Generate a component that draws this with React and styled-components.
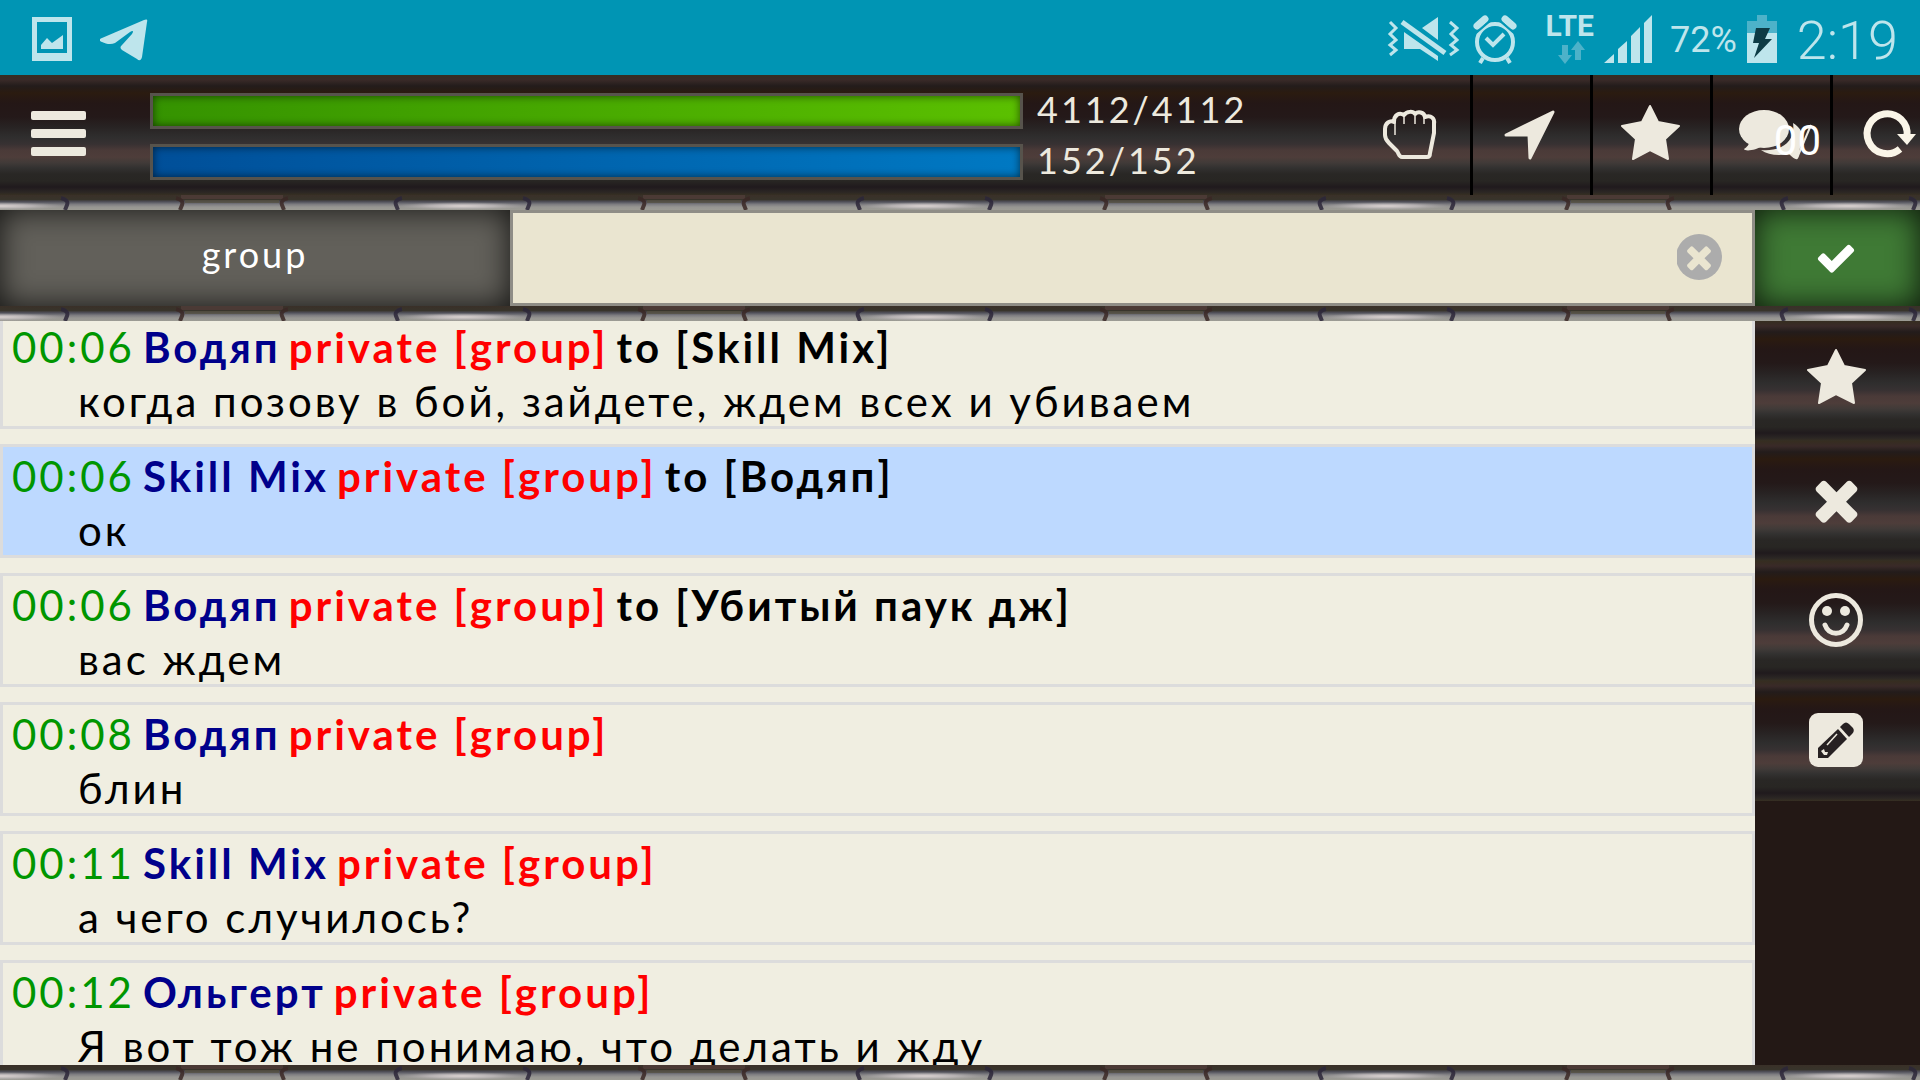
import { useEffect, useRef } from "react";
import styled, { createGlobalStyle, css } from "styled-components";

const GlobalStyle = createGlobalStyle`
  * {
    box-sizing: border-box;
  }

  body {
    margin: 0;
    background: #231815;
    font-family: Lato, "Noto Sans", sans-serif;
  }

  button {
    padding: 0;
    border: none;
    font: inherit;
    color: inherit;
    letter-spacing: inherit;
    cursor: pointer;
  }
`;

const wood = css`
  background: linear-gradient(
    #362d20 0,
    #392a28 5px,
    #231c1b 11px,
    #2b1b10 18px,
    #241716 28px,
    #241919 42px,
    #282323 52px,
    #2f2e2e 62px,
    #373132 69px,
    #4a3a38 75px,
    #4e3d3a 82px,
    #403a38 88px,
    #323130 93px,
    #292725 99px,
    #282623 106px,
    #201a1d 112px,
    #2b2624 117px,
    #362f22 120px
  );
  background-size: 100% 120px;
`;

const Page = styled.div`
  display: flex;
  flex-direction: column;
  height: 100vh;
  overflow: hidden;
  letter-spacing: 3px;
`;

/* status bar */

const StatusBar = styled.div`
  display: flex;
  flex: none;
  align-items: center;
  justify-content: space-between;
  height: 75px;
  padding: 2px 22px 0 32px;
  background: #0095b4;
  color: #bee5ec;
  font-family: Roboto, sans-serif;
  letter-spacing: normal;
`;

const StatusGroup = styled.div`
  display: flex;
  align-items: center;
  gap: ${({ $gap }) => $gap}px;
`;

const Network = styled.div`
  display: flex;
  flex-direction: column;
  align-items: flex-end;
  width: 65px;
  padding-bottom: 3px;
  font-size: 30px;
  font-weight: 700;
  line-height: 30px;
`;

const NetworkArrows = styled.svg`
  margin-right: 9px;
`;

const BatteryLevel = styled.span`
  padding: 3px 0 0 8px;
  font-size: 36px;
`;

const Clock = styled.span`
  padding: 4px 0 0 10px;
  font-size: 54px;
  font-weight: 300;
  line-height: 60px;
`;

/* header */

const Header = styled.header`
  display: grid;
  grid-template-columns: 150px 1fr 330px 567px;
  flex: none;
  height: 120px;
  color: #ede9de;
  ${wood}
`;

const MenuButton = styled.button`
  display: flex;
  align-items: center;
  padding: 0 0 3px 31px;
  background: none;
`;

const Bars = styled.div`
  display: flex;
  flex-direction: column;
  gap: 15px;
  padding-top: 18px;
`;

const Bar = styled.div`
  height: 36px;
  border: 3px solid #57534c;
  background: linear-gradient(to right, ${({ $from, $to }) => `${$from}, ${$to}`});
  box-shadow: inset 0 0 9px rgba(0, 0, 0, 0.6);
`;

const Values = styled.div`
  padding: 9px 0 0 14px;
  font-size: 36px;
  line-height: 51px;
`;

const Actions = styled.nav`
  display: flex;
  overflow: hidden;
`;

const ActionButton = styled.button`
  position: relative;
  display: flex;
  flex: none;
  align-items: center;
  justify-content: center;
  width: 120px;
  padding-right: 3px;
  border-right: 3px solid #000;
  background: none;
`;

const Counter = styled.span`
  position: absolute;
  top: 42px;
  right: 9px;
  color: #fff;
  font-family: Roboto, sans-serif;
  font-size: 42px;
  line-height: 48px;
  letter-spacing: normal;
`;

const ChainSvg = styled.svg`
  display: block;
  flex: none;
  width: 100%;
  height: 15px;
`;

/* message form */

const Form = styled.form`
  display: grid;
  grid-template-columns: 510px 1fr 165px;
  flex: none;
  height: 96px;
`;

const GroupButton = styled.button`
  padding-bottom: 9px;
  background: #62605a;
  box-shadow: inset 0 0 30px rgba(0, 0, 0, 0.8);
  color: #fff;
  font-size: 36px;
`;

const Field = styled.div`
  display: flex;
  align-items: center;
  border: 3px solid #8f8d86;
  background: #eae5d0;
`;

const FieldInput = styled.input`
  flex: 1;
  height: 100%;
  padding: 0 12px;
  border: none;
  outline: none;
  background: none;
  font: inherit;
  font-size: 42px;
`;

const ClearButton = styled.button`
  display: flex;
  margin-right: 30px;
  padding-bottom: 3px;
  background: none;
`;

const SendButton = styled.button`
  display: flex;
  align-items: center;
  justify-content: center;
  padding-right: 3px;
  background: #3f7a35;
  box-shadow: inset 0 0 30px rgba(0, 0, 0, 0.8);
`;

/* chat */

const Main = styled.main`
  display: grid;
  grid-template-columns: 1fr 165px;
  flex: 1;
  min-height: 0;
`;

const Messages = styled.div`
  display: flex;
  flex-direction: column;
  gap: 15px;
  padding-bottom: 15px;
  overflow-y: scroll;
  scrollbar-width: none;
  background: #f0eee1;
`;

const Message = styled.article`
  flex: none;
  padding-left: 9px;
  border: 3px solid #dcdcdc;
  background: ${({ $own }) => ($own ? "#bdd9ff" : "transparent")};
  color: #000;
  font-size: 42px;
`;

const MessageHead = styled.div`
  display: flex;
  gap: 8px;
  font-weight: 700;
  line-height: 58px;
`;

const Time = styled.time`
  color: #009600;
  font-weight: 400;
`;

const Author = styled.span`
  color: #00008b;
`;

const Private = styled.span`
  color: #f00;
`;

const MessageText = styled.p`
  margin: 0;
  padding-left: 66px;
  line-height: 50px;
`;

const Sidebar = styled.aside`
  display: flex;
  flex-direction: column;
  background: #231815;
  color: #ede9de;
`;

const SideButton = styled.button`
  display: flex;
  flex: none;
  align-items: center;
  justify-content: center;
  height: 120px;
  padding: 0 3px 3px 0;
  ${wood}
`;

/* icons */

const PhotoIcon = () => (
  <svg width="40" height="44" viewBox="0 0 40 44" fill="currentColor">
    <path fillRule="evenodd" d="M0 0H40V44H0ZM5 5V36H35V5Z" />
    <path d="M9 32V28L15 21L20 26L31 18V32Z" />
  </svg>
);

const TelegramIcon = () => (
  <svg width="48" height="44" viewBox="0 -2 48 44" fill="currentColor">
    <path d="M2 19L44 1C46 0 48 0 47 3L42 38C41 42 39 42 37 40L22 31C20 29 20 28 22 26L32 15C34 12 33 11 30 13L15 24C11 26 6 25 2 23C-1 22-1 20 2 19Z" />
  </svg>
);

const MuteIcon = () => (
  <svg width="76" height="50" viewBox="0 0 76 50" fill="currentColor">
    <path
      d="M3 8L9 14L3 20L9 26L3 31L9 36L3 41M63 8L70 14L64 20L70 26L64 31L70 36L63 41"
      fill="none"
      stroke="currentColor"
      strokeWidth="3"
    />
    <path d="M15 8L58 39" stroke="currentColor" strokeWidth="5" />
    <path d="M35 14L51 3V26ZM17 18L51 42V47L33 35H17Z" />
  </svg>
);

const AlarmIcon = () => (
  <svg width="46" height="50" viewBox="0 0 46 50" fill="none" stroke="currentColor">
    <circle cx="22" cy="28" r="18" strokeWidth="4" />
    <path d="M13 24L20 31L31 20" strokeWidth="4" />
    <path d="M4 12L12 5M40 12L32 5" strokeWidth="7" strokeLinecap="round" />
    <path d="M10 44L7 49M34 44L37 49" strokeWidth="4" />
    <path d="M3 19L17 7M41 19L27 7" stroke="#0095b4" strokeWidth="2" />
  </svg>
);

const SignalIcon = () => (
  <svg width="48" height="48" viewBox="0 0 48 48" fill="currentColor">
    <path d="M0 48L10 39V48ZM14 48V34L23 26V48ZM27 48V21L36 12V48ZM40 48V8L48 0V48Z" />
  </svg>
);

const BatteryIcon = () => (
  <svg width="30" height="48" viewBox="0 0 30 48">
    <path d="M10 0H20V6H30V18H0V6H10Z" fill="#4db2c9" />
    <path d="M0 18H30V48H0Z" fill="currentColor" />
    <path d="M9 13H23L18 24H25L7 43L12 28H6Z" fill="#0d3b45" />
  </svg>
);

const MenuIcon = () => (
  <svg width="55" height="45" viewBox="0 0 55 45" fill="currentColor">
    <rect width="55" height="9" rx="2" />
    <rect y="18" width="55" height="9" rx="2" />
    <rect y="36" width="55" height="9" rx="2" />
  </svg>
);

const HandIcon = () => (
  <svg width="56" height="52" viewBox="0 0 56 52" fill="none" stroke="currentColor">
    <path
      d="M3 26V20C3 14 8 11 12 13C12 6 17 3 22 6C25 2 31 2 33 5C36 2 42 3 43 8C49 6 53 9 52 15V24L48 44C48 47 47 48 45 48H20C17 48 17 45 15 42L7 34C4 31 3 29 3 26Z"
      strokeWidth="4"
      strokeLinejoin="round"
    />
    <path d="M13 12V26M22 7V15M33 7V15M42 8V15" strokeWidth="1.5" />
  </svg>
);

const ArrowIcon = () => (
  <svg width="54" height="52" viewBox="0 0 54 52" fill="currentColor">
    <path
      d="M50 3L27 49L26 26L3 26Z"
      stroke="currentColor"
      strokeWidth="3"
      strokeLinejoin="round"
    />
  </svg>
);

const StarIcon = () => (
  <svg width="59" height="63" viewBox="0 0 59 63" fill="currentColor">
    <path
      d="M29 2L37 18L58 22L44 35L47 55L29 46L12 55L15 35L1 22L21 18Z"
      stroke="currentColor"
      strokeWidth="2"
      strokeLinejoin="round"
    />
  </svg>
);

const CommentsIcon = () => (
  <svg width="62" height="50" viewBox="0 0 62 50" fill="currentColor" overflow="visible">
    <ellipse cx="25" cy="19" rx="25" ry="19" />
    <path d="M11 30C10 35 8 37 5 39C6 42 18 40 23 36Z" />
    <path d="M54 13C64 19 66 28 61 38L59 48C58 51 54 48 50 44C39 46 29 45 22 40C40 42 57 33 54 13Z" />
    <path d="M72 15L58 48" stroke="currentColor" strokeWidth="2" />
  </svg>
);

const RefreshIcon = () => (
  <svg width="52" height="50" viewBox="1 0 52 50" overflow="visible">
    <path d="M37 39A20 20 0 1 1 44 26" fill="none" stroke="#faf5e8" strokeWidth="7" />
    <path d="M34 24H53L44 35Z" fill="#faf5e8" />
  </svg>
);

const CheckIcon = () => (
  <svg width="42" height="42" viewBox="0 0 1792 1792" fill="#fff">
    <path d="M1671 566q0 40-28 68l-724 724-136 136q-28 28-68 28t-68-28l-136-136-362-362q-28-28-28-68t28-68l136-136q28-28 68-28t68 28l294 295 656-657q28-28 68-28t68 28l136 136q28 28 28 68z" />
  </svg>
);

const TIMES_PATH =
  "M1490 1322q0 40-28 68l-136 136q-28 28-68 28t-68-28l-294-294-294 294q-28 28-68 28t-68-28l-136-136q-28-28-28-68t28-68l294-294-294-294q-28-28-28-68t28-68l136-136q28-28 68-28t68 28l294 294 294-294q28-28 68-28t68 28l136 136q28 28 28 68t-28 68l-294 294 294 294q28 28 28 68z";

const TimesIcon = () => (
  <svg width="63" height="63" viewBox="0 0 1792 1792" fill="currentColor">
    <path d={TIMES_PATH} />
  </svg>
);

const ClearIcon = () => (
  <svg width="45" height="48" viewBox="0 0 45 48">
    <circle cx="22" cy="24" r="23" fill="#acacac" />
    <svg x="4" y="6" width="36" height="36" viewBox="0 0 1792 1792" fill="#eae5d0">
      <path d={TIMES_PATH} />
    </svg>
  </svg>
);

const SmileIcon = () => (
  <svg width="54" height="54" viewBox="0 0 54 54" fill="currentColor">
    <circle cx="27" cy="27" r="24.5" fill="none" stroke="currentColor" strokeWidth="5" />
    <circle cx="18" cy="18" r="5" />
    <circle cx="36" cy="18" r="5" />
    <path
      d="M16 32C20 43 34 43 38 32"
      fill="none"
      stroke="currentColor"
      strokeWidth="5"
      strokeLinecap="round"
    />
  </svg>
);

const PencilIcon = () => (
  <svg width="54" height="54" viewBox="0 0 54 54" fill="#272122">
    <rect width="54" height="54" rx="9" fill="currentColor" />
    <path d="M31 14L34 11Q37 8 40 11L44 15Q46 18 43 21L40 24Z" />
    <path d="M29 16L38 26L19 45H9V35Z" />
    <path d="M18 32L28 21" stroke="#ede9de" strokeWidth="1.5" />
    <path d="M12 38L15 36L16 39L19 39L18 42L15 42Z" fill="#ede9de" />
  </svg>
);

const JOINTS = [66, 181, 283, 397];

const Chain = ({ id }) => (
  <ChainSvg aria-hidden="true">
    <defs>
      <linearGradient id={`${id}-metal`} x1="0" y1="0" x2="0" y2="1">
        <stop offset="0" stopColor="#3a3028" />
        <stop offset="0.3" stopColor="#38342b" />
        <stop offset="0.45" stopColor="#50505a" />
        <stop offset="0.62" stopColor="#7d7c80" />
        <stop offset="0.8" stopColor="#979692" />
        <stop offset="1" stopColor="#9c9b94" />
      </linearGradient>
      <radialGradient id={`${id}-shine`}>
        <stop offset="0" stopColor="#dcd4d2" />
        <stop offset="0.5" stopColor="#d0c9cb" stopOpacity="0.6" />
        <stop offset="1" stopColor="#b0acac" stopOpacity="0" />
      </radialGradient>
      <pattern id={id} width="462" height="15" patternUnits="userSpaceOnUse">
        <rect width="462" height="15" fill={`url(#${id}-metal)`} />
        <rect x="181" width="102" height="4" fill="#4b3a35" />
        <rect x="185" y="5" width="94" height="3" fill="#55503f" opacity="0.7" />
        <ellipse cx="462" cy="11" rx="66" ry="4" fill={`url(#${id}-shine)`} />
        <ellipse cx="0" cy="11" rx="66" ry="4" fill={`url(#${id}-shine)`} />
        {JOINTS.map((x, i) => (
          <path
            key={x}
            d={
              i < 2
                ? `M${x - 5} 3Q${x + 3} 5 ${x + 1} 10L${x - 1} 15`
                : `M${x + 5} 3Q${x - 3} 5 ${x - 1} 10L${x + 1} 15`
            }
            fill="none"
            stroke={i === 0 || i === 3 ? "#2b2638" : "#3a2725"}
            strokeWidth="4"
            strokeOpacity="0.85"
          />
        ))}
      </pattern>
    </defs>
    <rect width="100%" height="15" fill={`url(#${id})`} />
  </ChainSvg>
);

const messages = [
  { time: "00:06", author: "Водяп", to: "Skill Mix", text: "когда позову в бой, зайдете, ждем всех и убиваем" },
  { time: "00:06", author: "Skill Mix", to: "Водяп", text: "ок", own: true },
  { time: "00:06", author: "Водяп", to: "Убитый паук дж", text: "вас ждем" },
  { time: "00:08", author: "Водяп", text: "блин" },
  { time: "00:11", author: "Skill Mix", text: "а чего случилось?" },
  { time: "00:12", author: "Ольгерт", text: "Я вот тож не понимаю, что делать и жду" },
];

const App = () => {
  const listRef = useRef(null);

  useEffect(() => {
    listRef.current.scrollTop = 6;
  }, []);

  return (
    <Page>
      <GlobalStyle />
      <StatusBar>
        <StatusGroup $gap={28}>
          <PhotoIcon />
          <TelegramIcon />
        </StatusGroup>
        <StatusGroup $gap={10}>
          <MuteIcon />
          <AlarmIcon />
          <Network>
            LTE
            <NetworkArrows width="27" height="23" viewBox="0 0 27 23" fill="#4db2c9">
              <path d="M4 4H10V14H14L7 23L0 14H4ZM17 19V9H13L20 0L27 9H23V19Z" />
            </NetworkArrows>
          </Network>
          <SignalIcon />
          <BatteryLevel>72%</BatteryLevel>
          <BatteryIcon />
          <Clock>2:19</Clock>
        </StatusGroup>
      </StatusBar>

      <Header>
        <MenuButton aria-label="Menu">
          <MenuIcon />
        </MenuButton>
        <Bars>
          <Bar $from="#359300" $to="#5bc000" />
          <Bar $from="#004f99" $to="#0079c3" />
        </Bars>
        <Values>
          <div>4112/4112</div>
          <div>152/152</div>
        </Values>
        <Actions>
          <ActionButton aria-label="Fight">
            <HandIcon />
          </ActionButton>
          <ActionButton aria-label="Location">
            <ArrowIcon />
          </ActionButton>
          <ActionButton aria-label="Favourites">
            <StarIcon />
          </ActionButton>
          <ActionButton aria-label="Chat">
            <CommentsIcon />
            <Counter>00</Counter>
          </ActionButton>
          <ActionButton aria-label="Refresh">
            <RefreshIcon />
          </ActionButton>
        </Actions>
      </Header>
      <Chain id="chain-top" />

      <Form onSubmit={(e) => e.preventDefault()}>
        <GroupButton type="button">group</GroupButton>
        <Field>
          <FieldInput type="text" aria-label="Message" />
          <ClearButton type="reset" aria-label="Clear">
            <ClearIcon />
          </ClearButton>
        </Field>
        <SendButton type="submit" aria-label="Send">
          <CheckIcon />
        </SendButton>
      </Form>
      <Chain id="chain-middle" />

      <Main>
        <Messages ref={listRef}>
          {messages.map(({ time, author, to, text, own }) => (
            <Message key={time + author + text} $own={own}>
              <MessageHead>
                <Time>{time}</Time>
                <Author>{author}</Author>
                <Private>private [group]</Private>
                {to && <span>to [{to}]</span>}
              </MessageHead>
              <MessageText>{text}</MessageText>
            </Message>
          ))}
        </Messages>
        <Sidebar>
          <SideButton aria-label="Favourites">
            <StarIcon />
          </SideButton>
          <SideButton aria-label="Close">
            <TimesIcon />
          </SideButton>
          <SideButton aria-label="Smiles">
            <SmileIcon />
          </SideButton>
          <SideButton aria-label="Write">
            <PencilIcon />
          </SideButton>
        </Sidebar>
      </Main>
      <Chain id="chain-bottom" />
    </Page>
  );
};

export default App;
